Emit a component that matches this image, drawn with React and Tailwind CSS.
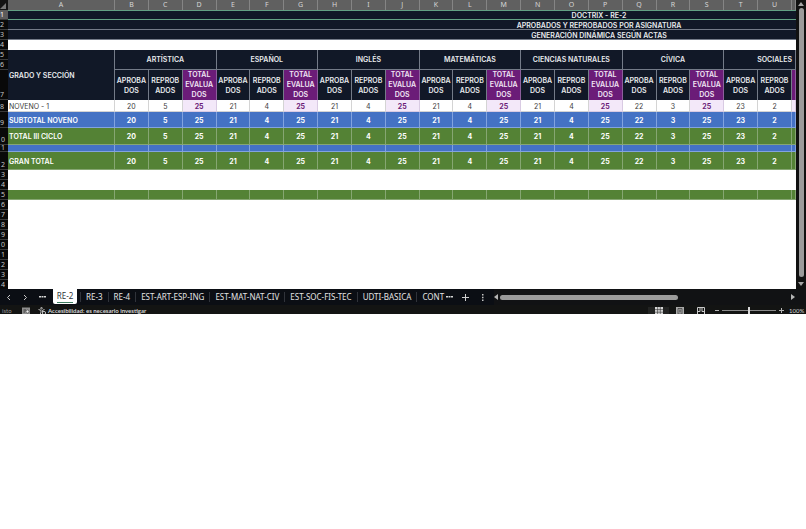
import React from "react";

const SUBJECTS = [
  { name: "ARTÍSTICA", passed: 20, failed: 5 },
  { name: "ESPAÑOL", passed: 21, failed: 4 },
  { name: "INGLÉS", passed: 21, failed: 4 },
  { name: "MATEMÁTICAS", passed: 21, failed: 4 },
  { name: "CIENCIAS NATURALES", passed: 21, failed: 4 },
  { name: "CÍVICA", passed: 22, failed: 3 },
  { name: "SOCIALES", passed: 23, failed: 2, cut: true },
];

const LETTERS = "BCDEFGHIJKLMNOPQRSTU".split("");
const TABS = ["RE-3", "RE-4", "EST-ART-ESP-ING", "EST-MAT-NAT-CIV", "EST-SOC-FIS-TEC", "UDTI-BASICA"];
const FILLER = Array.from({ length: 20 }, (_, i) => i);

function RowNumber({ n, short }) {
  return (
    <th
      className={
        "border-b border-[#3a3a3a] p-0 align-bottom font-['Noto_Sans',sans-serif] text-[7px] font-normal " +
        (short ? "leading-[6px] " : "leading-[9px] ") +
        (n === 1 ? "bg-[#5c5c5c] text-white" : "bg-[#090909] text-[#c4c4c4]")
      }
    >
      <div className="flex justify-end">
        <span className={n < 10 ? "w-3 shrink-0 text-center" : "w-[10px] shrink-0 text-center"}>{n % 10}</span>
      </div>
    </th>
  );
}

function TitleRow({ n, children, selected }) {
  return (
    <tr className="h-[10px]">
      <RowNumber n={n} />
      <td
        colSpan={22}
        className={
          "border-b bg-[#111827] p-0 pt-[2px] pl-[394px] text-center text-[7px] leading-[7px] font-semibold whitespace-nowrap text-[#e8eaed] " +
          (selected ? "border-[#63a184] shadow-[inset_0_1px_0_#63a184]" : "border-[#747b88]")
        }
      >
        {children}
      </td>
    </tr>
  );
}

function EmptyRow({ n }) {
  return (
    <tr className="h-[10px]">
      <RowNumber n={n} />
      <td colSpan={22} className="bg-white p-0" />
    </tr>
  );
}

function BandRow({ n, height, color, short }) {
  const cell = "border-r border-b p-0 " + color;
  return (
    <tr className={height}>
      <RowNumber n={n} short={short} />
      <td className={cell} />
      {FILLER.map((i) => (
        <td key={i} className={cell} />
      ))}
      <td className={cell} />
    </tr>
  );
}

function DataRow({ n, label, height, color, plain }) {
  const cell = "border-r border-b p-0 pt-px " + color;
  const weight = plain ? " font-normal" : " font-bold";
  const total = plain
    ? "border-r border-b border-[#d9cbe3] bg-[#f3e8f9] p-0 pt-px font-bold text-[#6b1c78]"
    : cell + " font-bold";
  return (
    <tr className={height + " text-center text-[7px] leading-[9px]"}>
      <RowNumber n={n} />
      <th className={cell + (plain ? " font-normal" : " font-semibold") + " pl-px text-left whitespace-nowrap"}>{label}</th>
      {SUBJECTS.map((s) => (
        <React.Fragment key={s.name}>
          <td className={cell + weight}>{s.passed}</td>
          <td className={cell + weight}>{s.failed}</td>
          <td className={total}>{s.cut ? "" : s.passed + s.failed}</td>
        </React.Fragment>
      ))}
    </tr>
  );
}

const BLUE = "border-[#82a3df] bg-[#4472c4] text-white";
const GREEN = "border-[#86a672] bg-[#548235] text-white";
const HEAD = "border-r border-[#747b88] bg-[#111827] p-0 pt-px font-semibold text-[#e8eaed]";

function Sheet() {
  return (
    <table className="w-full table-fixed border-separate border-spacing-0 font-['Inter','Liberation_Sans',sans-serif]">
      <colgroup>
        <col className="w-[8px]" />
        <col className="w-[107px]" />
        {LETTERS.map((l) => (
          <col key={l} />
        ))}
        <col className="w-[4px]" />
      </colgroup>
      <thead>
        <tr className="h-[10px] bg-[#606060] font-['Noto_Sans',sans-serif] text-[7px] leading-[10px] text-[#d6d6d6]">
          <th className="bg-[#141414] p-0">
            <svg viewBox="0 0 7 9" className="block h-[9px] w-[7px]" aria-hidden="true">
              <path d="M6 2V8H0Z" fill="#777" />
            </svg>
          </th>
          {["A", ...LETTERS, ""].map((l, i) => (
            <th key={i} className="border-r border-[#858585] p-0 font-normal">
              {l}
            </th>
          ))}
        </tr>
      </thead>
      <tbody>
        <TitleRow n={1} selected>DOCTRIX - RE-2</TitleRow>
        <TitleRow n={2}>APROBADOS Y REPROBADOS POR ASIGNATURA</TitleRow>
        <TitleRow n={3}>GENERACIÓN DINÁMICA SEGÚN ACTAS</TitleRow>
        <EmptyRow n={4} />
        <tr className="h-[10px] text-[7px] leading-[10px]">
          <RowNumber n={5} />
          <th rowSpan={3} className={HEAD + " pl-px text-left whitespace-nowrap"}>
            GRADO Y SECCIÓN
          </th>
          {SUBJECTS.map((s) => (
            <th
              key={s.name}
              colSpan={3}
              rowSpan={2}
              className={HEAD + " border-b text-center whitespace-nowrap" + (s.cut ? " pl-[30px]" : "")}
            >
              {s.name}
            </th>
          ))}
        </tr>
        <tr className="h-[10px]">
          <RowNumber n={6} />
        </tr>
        <tr className="text-center text-[7px] leading-[10px]">
          <RowNumber n={7} />
          {SUBJECTS.map((s) => (
            <React.Fragment key={s.name}>
              <th className={HEAD}>APROBA<br />DOS</th>
              <th className={HEAD}>REPROB<br />ADOS</th>
              <th className="border-r border-[#8d5f9c] bg-[#6b1c78] p-0 font-semibold text-[#f1e6f4]">
                {s.cut ? null : <>TOTAL<br />EVALUA<br />DOS</>}
              </th>
            </React.Fragment>
          ))}
        </tr>
        <DataRow n={8} label="NOVENO - 1" height="h-[12px]" plain color="border-[#d4d4d4] bg-white text-[#3c3c3c]" />
        <DataRow n={9} label="SUBTOTAL NOVENO" height="h-[16px]" color={BLUE} />
        <DataRow n={10} label="TOTAL III CICLO" height="h-[17px]" color={GREEN} />
        <BandRow n={11} height="h-[7px]" short color={BLUE} />
        <DataRow n={12} label="GRAN TOTAL" height="h-[18px]" color={GREEN} />
        <EmptyRow n={13} />
        <EmptyRow n={14} />
        <BandRow n={15} height="h-[10px]" color={GREEN} />
        {[16, 17, 18, 19, 20, 21, 22, 23, 24].map((n) => (
          <EmptyRow key={n} n={n} />
        ))}
      </tbody>
    </table>
  );
}

function VerticalScroll() {
  return (
    <div className="flex w-[10px] shrink-0 flex-col items-center bg-[#111111] py-[2px]">
      <svg viewBox="0 0 6 5" className="h-[5px] w-[6px]" aria-hidden="true">
        <path d="M3 0L6 4H0Z" fill="#a5a5a5" />
      </svg>
      <div className="mt-px w-[5px] flex-1 rounded-full bg-[#9b9b9b]" />
      <svg viewBox="0 0 6 5" className="mt-[5px] h-[5px] w-[6px]" aria-hidden="true">
        <path d="M0 0H6L3 4Z" fill="#a5a5a5" />
      </svg>
    </div>
  );
}

function Chevron({ d, label }) {
  return (
    <button type="button" aria-label={label} className="flex h-4 w-[17px] shrink-0 items-center justify-center">
      <svg viewBox="0 0 5 7" className="h-[7px] w-[5px]" fill="none" stroke="#c9c9c9" strokeWidth="1">
        <path d={d} />
      </svg>
    </button>
  );
}

function Dots() {
  return (
    <svg viewBox="0 0 7 2" className="h-[2px] w-[7px]" fill="#d6d6d6">
      <path d="M0 0H2V1.600H0ZM2.500 0H4.500V1.600H2.500ZM5 0H7V1.600H5Z" />
    </svg>
  );
}

function TabBar() {
  return (
    <nav className="flex h-4 items-center bg-[#0b0e14] font-['Noto_Sans',sans-serif] text-[8px] leading-[12px] text-[#e3e3e3]">
      <Chevron label="Anterior" d="M4 1L1.500 3.500L4 6" />
      <Chevron label="Siguiente" d="M1 1L3.500 3.500L1 6" />
      <button type="button" aria-label="Todas las hojas" className="flex w-[17px] shrink-0 items-center justify-center">
        <Dots />
      </button>
      <button type="button" className="mr-[3px] ml-[2px] h-[15px] w-6 shrink-0 self-start rounded-b-[2px] bg-white text-[#30363b]">
        <span className="block text-center leading-[12px]">RE-2</span>
        <span className="mx-auto block h-px w-4 bg-[#3f7d61]" />
      </button>
      {TABS.map((t) => (
        <button
          key={t}
          type="button"
          className="h-[10px] shrink-0 border-l border-[#30333a] px-[5px] leading-[10px] whitespace-nowrap"
        >
          {t}
        </button>
      ))}
      <button type="button" className="h-[10px] shrink-0 border-l border-[#30333a] pl-[5px] text-left leading-[10px]">
        CONT
      </button>
      <button type="button" aria-label="Más hojas" className="ml-px flex w-2 shrink-0 justify-center">
        <Dots />
      </button>
      <button type="button" aria-label="Hoja nueva" className="ml-[9px] shrink-0">
        <svg viewBox="0 0 7 7" className="h-[7px] w-[7px]" stroke="#d0d0d0" strokeWidth="1">
          <path d="M3.500 0V7M0 3.500H7" />
        </svg>
      </button>
      <svg viewBox="0 0 2 7" className="mr-[10px] ml-[13px] h-[7px] w-[2px] shrink-0" fill="#c4c4c4" aria-hidden="true">
        <path d="M0 0H1.500V1.500H0ZM0 2.700H1.500V4.200H0ZM0 5.400H1.500V6.900H0Z" />
      </svg>
      <div className="flex h-full flex-1 items-center bg-[#111214] pr-[11px]">
        <svg viewBox="0 0 4 6" className="mr-[2px] h-[6px] w-1" aria-hidden="true">
          <path d="M4 0V6L0 3Z" fill="#b5b5b5" />
        </svg>
        <div className="flex-1">
          <div className="h-[5px] w-[61%] rounded-full bg-[#9b9b9b]" />
        </div>
        <svg viewBox="0 0 4 6" className="h-[6px] w-1" aria-hidden="true">
          <path d="M0 0V6L4 3Z" fill="#b5b5b5" />
        </svg>
      </div>
    </nav>
  );
}

function StatusBar() {
  return (
    <footer className="flex h-[9px] items-start overflow-hidden bg-[#131413] pt-[2px] font-['Lato','Noto_Sans',sans-serif] text-[6px] leading-[8px] text-[#d8d8d8]">
      <span className="w-[22px] shrink-0 pl-[2px] text-[#989898]">isto</span>
      <svg viewBox="0 0 8 8" className="h-2 w-2 shrink-0" aria-hidden="true">
        <path d="M0 .5H8V7.500H0Z" fill="#8e8e8e" />
        <path d="M1.500 3H4M1.500 5H3" stroke="#222" strokeWidth=".8" />
        <circle cx="5.500" cy="4.500" r="1.500" fill="#eee" stroke="#222" strokeWidth=".5" />
      </svg>
      <svg viewBox="0 0 8 8" className="ml-2 h-2 w-2 shrink-0" fill="none" stroke="#cfcfcf" strokeWidth=".9" aria-hidden="true">
        <circle cx="3.500" cy="1.200" r=".8" />
        <path d="M.5 2.500L3 3.300V5L2 8M6.500 2.500L4.500 3.300V5" />
        <circle cx="6" cy="6" r="1.600" />
      </svg>
      <button type="button" className="ml-[2px] font-bold whitespace-nowrap">Accesibilidad: es necesario investigar</button>
      <div className="ml-auto flex shrink-0 items-start">
        <button type="button" aria-label="Normal" className="flex h-[7px] w-[21px] justify-center bg-[#222322]">
          <svg viewBox="0 0 8 8" className="h-2 w-2" fill="#d6d6d6">
            <path d="M0 0H8V8H0Z" />
            <path d="M0 2.600H8M0 5.200H8M2.600 0V8M5.300 0V8" stroke="#333" strokeWidth=".6" />
          </svg>
        </button>
        <button type="button" aria-label="Diseño de página" className="flex w-[21px] justify-center">
          <svg viewBox="0 0 8 8" className="h-2 w-2">
            <path d="M0 0H8V8H0Z" fill="#a9a9a9" />
            <path d="M2 1.500H6V7H2ZM3 3.200H5M3 4.800H5" fill="none" stroke="#333" strokeWidth=".7" />
          </svg>
        </button>
        <button type="button" aria-label="Vista de salto de página" className="flex w-[21px] justify-center">
          <svg viewBox="0 0 8 8" className="h-2 w-2" fill="none" stroke="#c9c9c9" strokeWidth="1">
            <path d="M.5 .5H7.500V7.500H.5ZM3 .5V4.500H.5M5 .5V4.500H7.500" />
          </svg>
        </button>
        <button type="button" aria-label="Alejar" className="ml-[2px] flex h-[7px] w-[8px] items-center justify-center">
          <span className="h-px w-1 bg-[#b5b5b5]" />
        </button>
        <input
          type="range"
          aria-label="Zoom"
          min="0"
          max="200"
          defaultValue="100"
          className="mx-px h-[7px] w-[54px] appearance-none bg-transparent [&::-webkit-slider-runnable-track]:h-px [&::-webkit-slider-runnable-track]:bg-[#8a8a8a] [&::-webkit-slider-thumb]:mt-[-3px] [&::-webkit-slider-thumb]:h-[7px] [&::-webkit-slider-thumb]:w-[2px] [&::-webkit-slider-thumb]:appearance-none [&::-webkit-slider-thumb]:bg-[#d8d8d8]"
        />
        <button type="button" aria-label="Acercar" className="flex h-[7px] w-[8px] items-center justify-center">
          <svg viewBox="0 0 5 5" className="h-[5px] w-[5px]" stroke="#b5b5b5" strokeWidth="1">
            <path d="M2.500 0V5M0 2.500H5" />
          </svg>
        </button>
        <span className="w-[21px] pl-[4px]">100%</span>
      </div>
    </footer>
  );
}

export default function App() {
  return (
    <main className="min-h-screen bg-white">
      <div className="flex h-[289px] overflow-hidden">
        <div className="min-w-0 flex-1">
          <Sheet />
        </div>
        <VerticalScroll />
      </div>
      <TabBar />
      <StatusBar />
    </main>
  );
}
